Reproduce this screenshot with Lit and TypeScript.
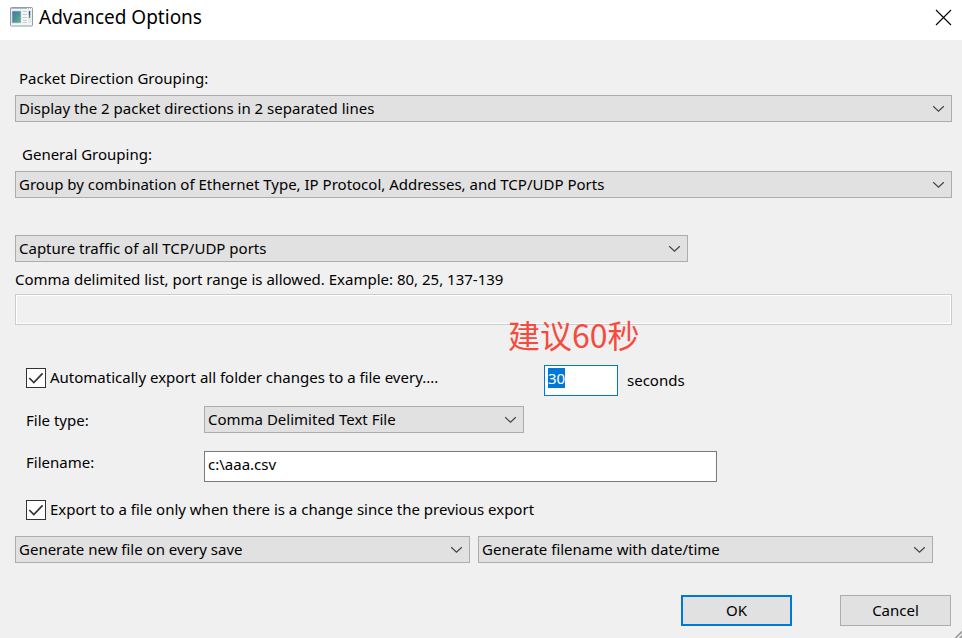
import { LitElement, html, css } from "lit";
import { customElement, query } from "lit/decorators.js";

@customElement("option-select")
class OptionSelect extends LitElement {
  static properties = { label: { type: String }, value: { type: String } };
  declare label: string;
  declare value: string;

  static styles = css`
    :host { display: block; position: relative; min-width: 0; }
    .select {
      appearance: none;
      display: block;
      box-sizing: border-box;
      width: 100%;
      height: 27px;
      margin: 0;
      padding: 0 28px 2px 3px;
      border: 1px solid #adadad;
      border-radius: 0;
      background: #e1e1e1;
      color: #000;
      font: inherit;
      outline: none;
      text-overflow: ellipsis;
    }
    .arrow {
      position: absolute;
      right: 7px;
      top: 10px;
      width: 13px;
      height: 8px;
      pointer-events: none;
    }
  `;

  render() {
    return html`
      <select class="select" aria-label=${this.label}>
        <option selected>${this.value}</option>
      </select>
      <svg class="arrow" viewBox="0 0 13 8" fill="none" stroke="#444" stroke-width="1.2">
        <path d="M1.2 1.2 6.5 6.2 11.8 1.2" />
      </svg>
    `;
  }
}

@customElement("app-root")
class AppRoot extends LitElement {
  @query(".interval") interval!: HTMLInputElement;

  static styles = css`
    :host {
      display: block;
      min-height: 100vh;
      background: #f0f0f0;
      color: #000;
      font: 15px/22px "Noto Sans", "Noto Sans CJK SC", sans-serif;
    }
    .titlebar {
      display: flex;
      align-items: center;
      box-sizing: border-box;
      height: 40px;
      padding: 0 10px 6px 10px;
      gap: 6px;
      background: #fff;
    }
    .app-icon { width: 23px; height: 20px; }
    .title { flex: 1; margin: 0; font-size: 19px; font-weight: 400; }
    .close { display: flex; padding: 0; border: 0; background: none; }
    .body { position: relative; padding: 27px 10px 12px 15px; }
    .group { display: grid; gap: 6px; margin-bottom: 21px; }
    .group-label { padding-left: 4px; }
    .group-label.inset { padding-left: 7px; }
    .ports { display: grid; grid-template-columns: 673fr 264fr; margin-top: 37px; }
    .hint { display: block; margin-top: 6px; }
    .text {
      box-sizing: border-box;
      width: 100%;
      height: 31px;
      margin: 0;
      padding: 0 3px 6px;
      border: 1px solid #7a7a7a;
      border-radius: 0;
      background: #fff;
      color: #000;
      font: inherit;
      outline: none;
    }
    .text:disabled {
      display: block;
      margin-top: 4px;
      border-color: #ccc;
      background: #f0f0f0;
      box-shadow: inset 0 0 0 1px #fff;
    }
    .row { display: flex; padding-left: 11px; }
    .export { margin-top: 40px; }
    .check { display: flex; align-items: center; gap: 4px; height: 26px; }
    .check label { padding-bottom: 2px; }
    .box { display: grid; width: 20px; height: 20px; }
    .box > * { grid-area: 1 / 1; }
    .tick {
      appearance: none;
      box-sizing: border-box;
      width: 20px;
      height: 20px;
      margin: 0;
      border: 1px solid #333;
      background: #fff;
    }
    .mark { width: 20px; height: 20px; pointer-events: none; visibility: hidden; }
    .tick:checked + .mark { visibility: visible; }
    .auto { flex: 0 1 518px; }
    .period { position: relative; display: flex; align-items: center; gap: 9px; }
    .period label { padding-bottom: 2px; }
    .text.interval { width: 74px; border-color: #0078d7; }
    .interval::selection { background: #0078d7; color: #fff; }
    .note {
      position: absolute;
      left: -36px;
      bottom: 42px;
      color: #f44b3e;
      font: 32px/40px "Noto Sans CJK SC", sans-serif;
      white-space: nowrap;
    }
    .type { margin-top: 10px; align-items: center; }
    .name { margin-top: 18px; }
    .field-label { flex: 0 0 178px; }
    .type-select { flex: 0 1 320px; }
    .name-input { flex: 0 1 513px; }
    .only { margin-top: 15px; }
    .modes {
      display: grid;
      grid-template-columns: 1fr 1fr;
      gap: 8px;
      margin-top: 13px;
      padding-right: 19px;
    }
    .actions {
      display: flex;
      justify-content: flex-end;
      gap: 48px;
      margin-top: 32px;
      padding-right: 1px;
    }
    .button {
      box-sizing: border-box;
      width: 111px;
      height: 31px;
      padding: 0 0 2px;
      border: 1px solid #adadad;
      border-radius: 0;
      background: #e1e1e1;
      color: #000;
      font: inherit;
    }
    .button.primary { border: 2px solid #0078d7; }
    .grip { position: absolute; right: 0; bottom: 0; width: 8px; height: 8px; }
  `;

  firstUpdated() {
    this.interval.focus();
    this.interval.select();
  }

  private checkbox(id: string, text: string) {
    return html`
      <span class="box">
        <input class="tick" id=${id} type="checkbox" checked />
        <svg class="mark" viewBox="0 0 20 20" fill="none" stroke="#333" stroke-width="1.7">
          <path d="M3.3 10 7.8 14.5 16.6 5.4" />
        </svg>
      </span>
      <label for=${id}>${text}</label>
    `;
  }

  render() {
    return html`
      <header class="titlebar">
        <svg class="app-icon" viewBox="0 0 23 20">
          <defs>
            <linearGradient id="pane" x1="0" y1="0" x2="1" y2="1">
              <stop offset="0" stop-color="#4773ad" />
              <stop offset=".5" stop-color="#4b9399" />
              <stop offset="1" stop-color="#68b583" />
            </linearGradient>
          </defs>
          <rect x=".5" y=".5" width="22" height="18.5" rx="1" fill="#f5f6f7" stroke="#939ba3" />
          <path d="M1 1.5h21" stroke="#aeb9c8" />
          <path d="M17 1.5h1M19 1.5h1M21 1.5h1" stroke="#fff" />
          <rect x="2" y="4" width="9" height="12" fill="url(#pane)" stroke="#c6d2dc" stroke-width=".6" />
          <path d="M13 4.5h4M13 7.5h4M13 10.5h4M13 13.5h4M13 15.5h4" stroke="#c9cccf" />
          <rect x="18.5" y="3.5" width="3" height="12.5" fill="#e4e7ea" />
          <path d="M19.5 4v4" stroke="#315e9c" stroke-width="1.4" />
          <path d="M19.5 8v3" stroke="#4e9b68" stroke-width="1.4" />
        </svg>
        <h1 class="title">Advanced Options</h1>
        <button class="close" aria-label="Close">
          <svg width="17" height="17" viewBox="0 0 17 17" stroke="#000" stroke-width="1.1">
            <path d="M1 1 16 16M16 1 1 16" />
          </svg>
        </button>
      </header>
      <main class="body">
        <div class="group">
          <span class="group-label">Packet Direction Grouping:</span>
          <option-select
            label="Packet Direction Grouping"
            value="Display the 2 packet directions in 2 separated lines"
          ></option-select>
        </div>
        <div class="group">
          <span class="group-label inset">General Grouping:</span>
          <option-select
            label="General Grouping"
            value="Group by combination of Ethernet Type, IP Protocol, Addresses, and TCP/UDP Ports"
          ></option-select>
        </div>
        <div class="ports">
          <option-select label="Captured ports" value="Capture traffic of all TCP/UDP ports"></option-select>
        </div>
        <label class="hint" for="ports">Comma delimited list, port range is allowed. Example: 80, 25, 137-139</label>
        <input class="text" id="ports" type="text" disabled />
        <div class="row export">
          <div class="check auto">
            ${this.checkbox("auto", "Automatically export all folder changes to a file every....")}
          </div>
          <div class="period">
            <input class="text interval" id="interval" type="text" .value=${"30"} />
            <label for="interval">seconds</label>
            <span class="note">建议60秒</span>
          </div>
        </div>
        <div class="row type">
          <span class="field-label">File type:</span>
          <option-select class="type-select" label="File type" value="Comma Delimited Text File"></option-select>
        </div>
        <div class="row name">
          <label class="field-label" for="filename">Filename:</label>
          <input class="text name-input" id="filename" type="text" .value=${"c:\\aaa.csv"} />
        </div>
        <div class="row only">
          <div class="check">
            ${this.checkbox("only", "Export to a file only when there is a change since the previous export")}
          </div>
        </div>
        <div class="modes">
          <option-select label="Save mode" value="Generate new file on every save"></option-select>
          <option-select label="Filename mode" value="Generate filename with date/time"></option-select>
        </div>
        <div class="actions">
          <button class="button primary">OK</button>
          <button class="button">Cancel</button>
        </div>
        <svg class="grip" viewBox="0 0 8 8" stroke="#999" stroke-width="1.6">
          <path d="M1 8.5 8.5 1M5.5 8.5 8.5 5.5" />
        </svg>
      </main>
    `;
  }
}
